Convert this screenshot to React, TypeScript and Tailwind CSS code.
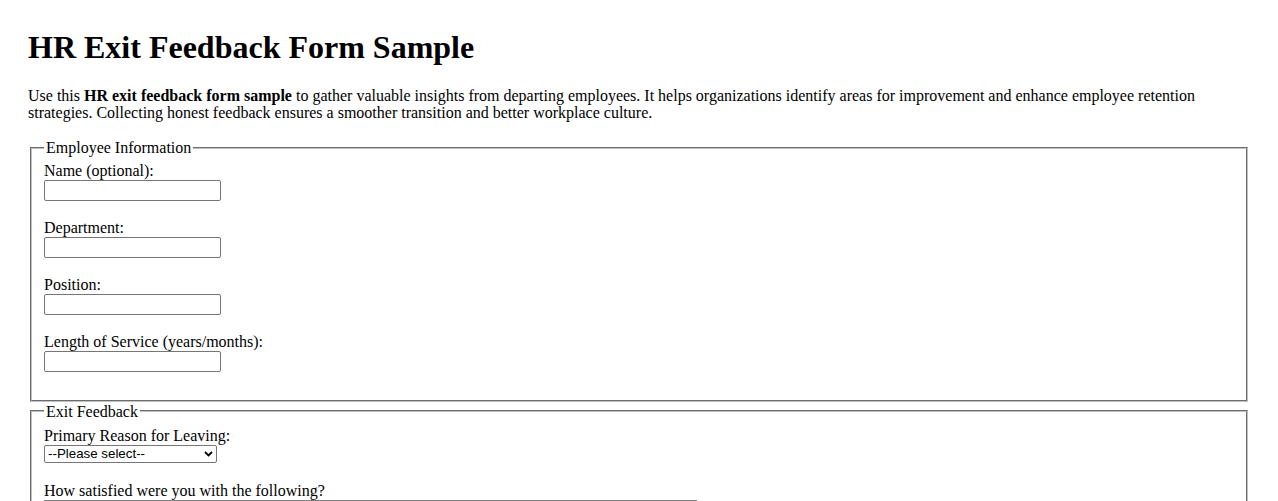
const FIELDS = [
  "Name (optional):",
  "Department:",
  "Position:",
  "Length of Service (years/months):",
];

const ASPECTS = [
  "Job Responsibilities",
  "Management & Supervision",
  "Compensation & Benefits",
  "Work-Life Balance",
  "Career Growth Opportunities",
  "Company Culture",
];

const RATINGS = ["Very Satisfied", "Satisfied", "Neutral", "Dissatisfied", "Very Dissatisfied"];

const App = () => {
  return (
    <div className="px-[28px] pt-[8px] pb-[20px] font-['Times_New_Roman','Liberation_Serif',serif] text-[16px] leading-[17.7px] text-black bg-white">
      <h1 className="mt-[22px] mb-[21.6px] text-[32px] leading-[35px] font-bold">
        HR Exit Feedback Form Sample
      </h1>

      <p className="mb-[17.4px]">
        Use this <strong className="font-bold">HR exit feedback form sample</strong> to gather valuable insights from
        departing employees. It helps organizations identify areas for improvement and enhance employee retention
        strategies. Collecting honest feedback ensures a smoother transition and better workplace culture.
      </p>

      <form>
        {/* Employee Information */}
        <fieldset className="mx-[2px] border-2 border-[#c0c0c0] [border-style:groove] px-[12px] pt-[5.4px] pb-[11.8px]">
          <legend className="px-[2px]">Employee Information</legend>
          {FIELDS.map((label, i) => (
            <div key={label} className={i < FIELDS.length - 1 ? "mb-[18.1px]" : ""}>
              <label className="block">{label}</label>
              <input
                type="text"
                className="block mt-[0.2px] h-[21px] w-[177px] border border-[#767676] rounded-[2px] px-[2px] text-[13.33px] font-['Arial','Liberation_Sans',sans-serif]"
              />
            </div>
          ))}
          <div className="h-[15.4px]" />
        </fieldset>

        {/* Exit Feedback */}
        <fieldset className="mt-[1px] mx-[2px] border-2 border-[#c0c0c0] [border-style:groove] px-[12px] pt-[6.9px] pb-[11.8px]">
          <legend className="px-[2px]">Exit Feedback</legend>
          <label className="block">Primary Reason for Leaving:</label>
          <div className="relative w-[173px] h-[18.4px]">
            <select
              defaultValue=""
              className="appearance-none block w-full h-full border border-[#767676] rounded-[2px] pl-[3px] pr-[20px] bg-white text-[13.33px] leading-[16px] font-['Arial','Liberation_Sans',sans-serif] text-black"
            >
              <option value="">--Please select--</option>
              <option>Better Opportunity</option>
              <option>Compensation</option>
              <option>Relocation</option>
              <option>Personal Reasons</option>
              <option>Other</option>
            </select>
            <svg
              className="pointer-events-none absolute right-[4px] top-[6px] w-[9px] h-[6px]"
              viewBox="0 0 9 6"
              fill="none"
            >
              <path d="M1 1 L4.5 4.5 L8 1" stroke="#000" strokeWidth="1.8" />
            </svg>
          </div>

          <label className="block mt-[18.3px]">How satisfied were you with the following?</label>
          <table className="mt-[1px] w-[653px] border border-[#808080] border-separate border-spacing-[2px] text-[16px]">
            <thead>
              <tr>
                <th className="border border-[#808080] p-[4px] text-left">Aspect</th>
                {RATINGS.map((r) => (
                  <th key={r} className="border border-[#808080] p-[4px]">
                    {r}
                  </th>
                ))}
              </tr>
            </thead>
            <tbody>
              {ASPECTS.map((a) => (
                <tr key={a}>
                  <td className="border border-[#808080] p-[4px]">{a}</td>
                  {RATINGS.map((r) => (
                    <td key={r} className="border border-[#808080] p-[4px] text-center">
                      <input type="radio" name={a} />
                    </td>
                  ))}
                </tr>
              ))}
            </tbody>
          </table>
        </fieldset>
      </form>
    </div>
  );
};

export default App;
